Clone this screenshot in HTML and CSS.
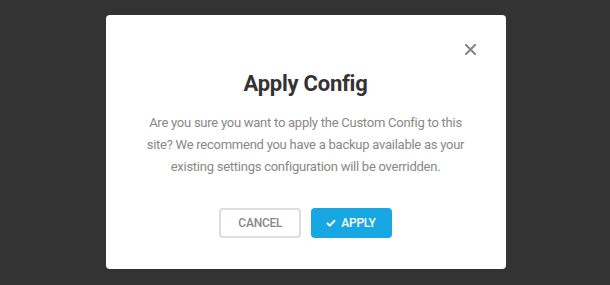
FILE: index.html
```html
<!DOCTYPE html>
<html lang="en">
<head>
<meta charset="utf-8">
<title>Apply Config</title>
<link rel="stylesheet" href="styles.css">
</head>
<body>
<div class="overlay">
  <div class="modal" role="dialog" aria-labelledby="modal-title">
    <button class="close" aria-label="Close">
      <svg width="11" height="11" viewBox="0 0 11 11" aria-hidden="true">
        <path d="M1 1 L10 10 M10 1 L1 10" stroke="#888" stroke-width="2.2" stroke-linecap="square" fill="none"/>
      </svg>
    </button>
    <h1 id="modal-title" class="title">Apply Config</h1>
    <p class="desc">Are you sure you want to apply the Custom Config to this site? We recommend you have a backup available as your existing settings configuration will be overridden.</p>
    <div class="actions">
      <button class="btn btn-ghost">Cancel</button>
      <button class="btn btn-blue">
        <svg class="check" width="10" height="8" viewBox="0 0 10 8" aria-hidden="true">
          <path d="M1 4 L3.8 6.6 L9 1.2" stroke="#fff" stroke-width="2" fill="none"/>
        </svg>
        Apply
      </button>
    </div>
  </div>
</div>
</body>
</html>
```

FILE: styles.css
```css
html, body {
  margin: 0;
  padding: 0;
}
body {
  background: #333333;
  width: 610px;
  height: 285px;
  overflow: hidden;
  font-family: Roboto, "Liberation Sans", Arial, sans-serif;
  letter-spacing: -0.25px;
}
.overlay {
  display: flex;
  justify-content: center;
  padding-top: 15px;
  padding-left: 1px;
}
.modal {
  position: relative;
  width: 400px;
  box-sizing: border-box;
  padding: 54px 35px 31px;
  background: #fff;
  border-radius: 4px;
  text-align: center;
}
.close {
  position: absolute;
  top: 29px;
  right: 30px;
  width: 11px;
  height: 11px;
  padding: 0;
  border: 0;
  background: none;
  display: flex;
  cursor: pointer;
}
.title {
  margin: 0;
  font-size: 22px;
  line-height: 30px;
  font-weight: 700;
  color: #333;
}
.desc {
  margin: 13px 0 0;
  font-size: 13px;
  line-height: 22px;
  color: #888;
}
.actions {
  margin-top: 30px;
  display: flex;
  justify-content: center;
  gap: 10px;
}
.btn {
  height: 30px;
  box-sizing: border-box;
  border-radius: 4px;
  font-family: Roboto, "Liberation Sans", Arial, sans-serif;
  font-size: 12px;
  font-weight: 500;
  letter-spacing: -0.25px;
  text-transform: uppercase;
  display: flex;
  align-items: center;
  cursor: pointer;
}
.btn-ghost {
  padding: 0 17px;
  background: #fff;
  border: 2px solid #ddd;
  color: #888;
}
.btn-blue {
  padding: 0 14px 0 13px;
  background: #17a8e3;
  border: 2px solid #17a8e3;
  color: #fff;
  gap: 5px;
}
.check {
  display: block;
}
```
